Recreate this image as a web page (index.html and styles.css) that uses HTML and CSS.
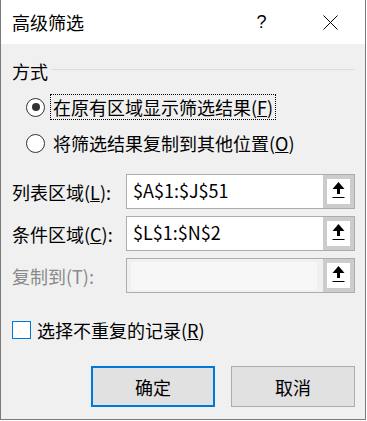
FILE: index.html
```html
<!DOCTYPE html>
<html lang="zh-CN">
<head>
    <meta charset="UTF-8">
    <title>高级筛选</title>
    <link rel="stylesheet" href="styles.css">
</head>
<body>
    <div class="window">
        <div class="titlebar">
            <span class="title">高级筛选</span>
            <span class="cap-btn help">?</span>
            <span class="cap-btn close">
                <svg width="15" height="15" viewBox="0 0 15 15">
                    <path d="M0.5 0.5L14.5 14.5M14.5 0.5L0.5 14.5" stroke="#000" stroke-width="1" fill="none"/>
                </svg>
            </span>
        </div>

        <div class="content">
            <div class="group-head">
                <span>方式</span>
                <span class="group-line"></span>
            </div>

            <label class="radio-row first">
                <span class="radio checked"></span>
                <span class="radio-text focus">在原有区域显示筛选结果(<u>F</u>)</span>
            </label>
            <label class="radio-row">
                <span class="radio"></span>
                <span class="radio-text">将筛选结果复制到其他位置(<u>O</u>)</span>
            </label>

            <div class="field first">
                <span class="field-label">列表区域(<u>L</u>):</span>
                <div class="edit">
                    <span class="edit-text">$A$1:$J$51</span>
                    <span class="pick">
                        <svg width="23" height="25" viewBox="0 0 23 25">
                            <polygon points="11.5,3 5.5,10 17.5,10" fill="#000"/>
                            <rect x="10" y="10" width="3" height="5" fill="#000"/>
                            <rect x="5.5" y="18" width="12" height="1" fill="#000"/>
                        </svg>
                    </span>
                </div>
            </div>
            <div class="field">
                <span class="field-label">条件区域(<u>C</u>):</span>
                <div class="edit">
                    <span class="edit-text">$L$1:$N$2</span>
                    <span class="pick">
                        <svg width="23" height="25" viewBox="0 0 23 25">
                            <polygon points="11.5,3 5.5,10 17.5,10" fill="#000"/>
                            <rect x="10" y="10" width="3" height="5" fill="#000"/>
                            <rect x="5.5" y="18" width="12" height="1" fill="#000"/>
                        </svg>
                    </span>
                </div>
            </div>
            <div class="field disabled">
                <span class="field-label">复制到(T):</span>
                <div class="edit">
                    <span class="edit-text"><span class="edit-fill"></span></span>
                    <span class="pick">
                        <svg width="23" height="25" viewBox="0 0 23 25">
                            <polygon points="11.5,3 5.5,10 17.5,10" fill="#000"/>
                            <rect x="10" y="10" width="3" height="5" fill="#000"/>
                            <rect x="5.5" y="18" width="12" height="1" fill="#000"/>
                        </svg>
                    </span>
                </div>
            </div>

            <label class="check-row">
                <span class="checkbox"></span>
                <span>选择不重复的记录(<u>R</u>)</span>
            </label>

            <div class="buttons">
                <button class="btn default">确定</button>
                <button class="btn">取消</button>
            </div>
        </div>
    </div>
</body>
</html>
```

FILE: styles.css
```css
body {
    margin: 0;
    background-color: #fff;
    font-family: "Noto Sans CJK SC", "Noto Sans", sans-serif;
    font-size: 18px;
    color: #000;
}

.window {
    width: 366px;
    height: 420px;
    box-sizing: border-box;
    border: 1px solid #7a7a7a;
    border-top: none;
    background-color: #f0f0f0;
}

.titlebar {
    display: flex;
    align-items: center;
    height: 44px;
    background-color: #fff;
}

.title {
    flex: 1;
    padding-left: 11px;
    line-height: 24px;
}

.cap-btn {
    display: flex;
    align-items: center;
    justify-content: center;
    width: 69px;
    height: 44px;
}

.help {
    font-family: "Liberation Sans", sans-serif;
    font-size: 18px;
}

.content {
    padding: 0 10px 0 11px;
}

.group-head {
    display: flex;
    margin-top: 15px;
    height: 24px;
    line-height: 24px;
}

.group-line {
    flex: 1;
    height: 1px;
    margin: 10px 0 0 4px;
    background-color: #dcdcdc;
}

.radio-row {
    display: flex;
    align-items: center;
    height: 26px;
    margin-top: 10px;
}

.radio-row.first {
    margin-top: 11px;
}

.radio {
    position: relative;
    width: 19px;
    height: 19px;
    box-sizing: border-box;
    margin-left: 14px;
    border: 1px solid #333;
    border-radius: 50%;
    background-color: #fff;
}

.radio.checked::after {
    content: "";
    position: absolute;
    left: 4.5px;
    top: 4.5px;
    width: 8px;
    height: 8px;
    border-radius: 50%;
    background-color: #333;
}

.radio-text {
    margin-left: 5px;
    padding: 0 2px;
    line-height: 24px;
    border: 1px solid transparent;
}

.radio-text.focus {
    border: 1px dotted #000;
}

.field {
    display: flex;
    align-items: center;
    height: 35px;
    margin-top: 7px;
}

.field.first {
    margin-top: 18px;
}

.field-label {
    width: 114px;
    line-height: 24px;
}

.field.disabled .field-label {
    color: #8a8a8a;
}

.edit {
    display: flex;
    flex: 1;
    height: 35px;
    box-sizing: border-box;
    border: 1px solid #acacac;
    background-color: #fff;
}

.edit-text {
    flex: 1;
    padding-left: 6px;
    line-height: 31px;
}

.field.disabled .edit {
    background-color: #f0f0f0;
}

.field.disabled .edit-text {
    display: flex;
    padding: 3px 6px 2px 4px;
}

.edit-fill {
    flex: 1;
    background-color: #f7f7f7;
}

.pick {
    display: flex;
    width: 31px;
    box-sizing: border-box;
    border: 4px solid #cccccc;
    background-color: #fff;
}

.check-row {
    display: flex;
    align-items: center;
    height: 24px;
    margin-top: 25px;
    line-height: 24px;
}

.checkbox {
    width: 19px;
    height: 18px;
    box-sizing: border-box;
    margin-right: 6px;
    border: 1px solid #0078d7;
    background-color: #fff;
}

.buttons {
    display: flex;
    justify-content: flex-end;
    gap: 16px;
    margin-top: 24px;
}

.btn {
    width: 124px;
    height: 41px;
    padding: 0;
    border: 1px solid #adadad;
    background-color: #e1e1e1;
    font-family: inherit;
    font-size: 18px;
    color: #000;
}

.btn.default {
    border: 2px solid #0078d7;
}
```
